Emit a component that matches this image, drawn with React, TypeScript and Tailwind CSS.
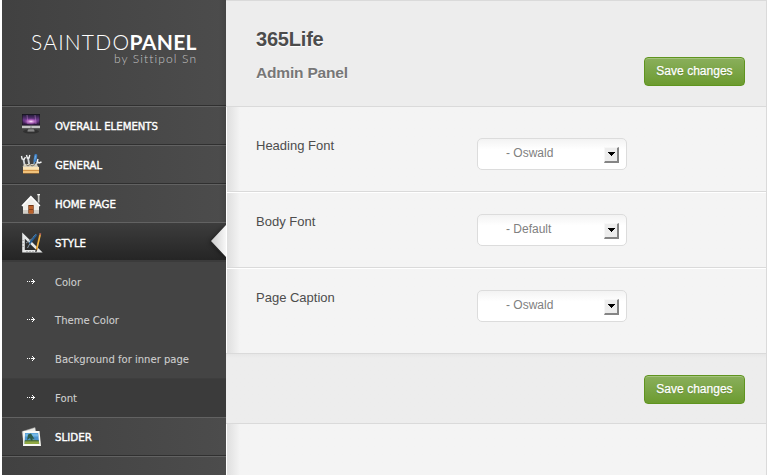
import React from "react";

const menuRow =
  "relative flex items-center h-[39px] shrink-0 border-t border-t-[#626262] border-b border-b-[#303030] bg-linear-to-r from-[#414141] to-[#4c4c4c] pl-[17px]";

function MonitorIcon() {
  return (
    <svg width="24" height="24" viewBox="0 1 24 24">
      <defs>
        <linearGradient id="screen" x1="0" y1="0" x2="0" y2="1">
          <stop offset="0" stopColor="#1f1a33" />
          <stop offset=".5" stopColor="#6d3a8c" />
          <stop offset="1" stopColor="#1c1028" />
        </linearGradient>
        <radialGradient id="glow">
          <stop offset="0" stopColor="#ffe3ff" />
          <stop offset=".5" stopColor="#c36acb" stopOpacity=".8" />
          <stop offset="1" stopColor="#7b399a" stopOpacity="0" />
        </radialGradient>
      </defs>
      <ellipse cx="12" cy="18.500" rx="8" ry="2" fill="#303030" />
      <path d="M9.500 15.500h5l.8 2.500H8.700z" fill="#777" />
      <path d="M8.500 17.500h7v1h-7z" fill="#999" />
      <path d="M3 1h18v14.500H3z" fill="#151515" />
      <path d="M3.500 1.500h17v11h-17z" fill="url(#screen)" />
      <ellipse cx="12" cy="8.500" rx="8" ry="3.500" fill="url(#glow)" />
      <path d="M8 2l1 9M16 2l1 9" stroke="#bb83cb" strokeWidth=".5" />
      <path d="M3 12.600h18v2.700H3z" fill="#c4c4c4" />
      <circle cx="12" cy="14" r=".6" fill="#444" />
    </svg>
  );
}

function ToolsIcon() {
  return (
    <svg width="24" height="24" viewBox="0 0 24 24">
      <path d="M6 14L4.500 6.500M10.500 13L9 5M16 13l3-4.500" stroke="#cfd4d8" strokeWidth="1.800" />
      <path d="M2.500 3l.6 3 2 .5 1.300-2.500M7.500 2l.8 3h1.700l.8-3M19 6l-.8 2.500 1.800 1.500 2.500-1" fill="none" stroke="#f3f5f6" strokeWidth="1.400" />
      <path d="M14.700 12l2-9" stroke="#6f9cc7" strokeWidth="1.500" />
      <path d="M16 7.500l.8-5" stroke="#3f7fc4" strokeWidth="3" strokeLinecap="round" />
      <path d="M15.800 6.500l.8-4" stroke="#86bfe9" strokeWidth=".8" />
      <path d="M5.500 11h12l2 3h-16z" fill="#d5cfbe" />
      <path d="M7 11.500l2 1.500 2-1.500 2 1.500 3-1.500" fill="none" stroke="#746e62" />
      <path d="M4 14h16v6.500H4z" fill="#c98535" />
      <path d="M4 14h16v3H4z" fill="#fae3b4" />
      <path d="M4 17.300h16" stroke="#c0792c" strokeWidth=".7" />
      <path d="M4 17.700h16v2.300H4z" fill="#f0c27b" />
    </svg>
  );
}

function HomeIcon() {
  return (
    <svg width="24" height="24" viewBox="0 0 24 24">
      <path d="M18.800 2.500h1.700v8h-1.700z" fill="#c9c9c4" />
      <path d="M18.300 2h2.700v1.300h-2.700z" fill="#f6f6f4" />
      <path d="M4 12.500l8-8 8 8v9H4z" fill="#efeeea" />
      <path d="M4 18h16v3.500H4z" fill="#d1cec7" />
      <path d="M3 14L11.900 4.500l9 9.500" fill="none" stroke="#fff" strokeWidth="1.500" />
      <path d="M9.300 13h5.400v8.500H9.300z" fill="#723514" />
      <path d="M10 14h4v7.500h-4z" fill="#ba622c" />
      <path d="M10 17.500h4" stroke="#87421d" />
    </svg>
  );
}

function StyleIcon() {
  return (
    <svg width="24" height="24" viewBox="0 0 24 24">
      <path d="M4.500 4.500v15.700h16z" fill="none" stroke="#e6e8e8" strokeWidth="2.600" />
      <path d="M4 9v1M4 12v1M4 15v1M8 20v1M11 20v1M14 20v1" stroke="#888" />
      <path d="M8.500 17L15 5l2-2M7 12l10-7" fill="none" stroke="#8fa1b1" strokeWidth=".9" />
      <path d="M11 12l6-8" stroke="#275f94" strokeWidth="2" strokeLinecap="round" />
      <path d="M17.500 19L21 4" stroke="#d99126" strokeWidth="1.800" />
      <path d="M18 17l3.200-13" stroke="#ffd165" strokeWidth=".7" />
      <path d="M21.400 2.300l-.4 1.700" stroke="#c06b57" strokeWidth="1.800" />
      <path d="M17.400 18.500l-.6 2.300" stroke="#161616" strokeWidth="1.200" />
    </svg>
  );
}

function PhotosIcon() {
  return (
    <svg width="24" height="24" viewBox="0 0 24 24">
      <path d="M3 6.500l13-4 3 14L5 20z" fill="#e9e9e5" stroke="#999" strokeWidth=".5" />
      <path d="M4.500 6h16L22 21H4z" fill="#fafaf5" />
      <path d="M6 8h13.200l1 11H5.500z" fill="#4a92cd" />
      <path d="M6.300 8.500h12.500l.4 3H6.300z" fill="#72b7e5" />
      <path d="M5.700 16q7-3 14.200 0l.3 3H5.500z" fill="#91a943" />
      <path d="M9 9.500l3-1 3.500 5.500-2-.5v2h-1.500l-1-2.500-3 2z" fill="#2d5a46" />
      <path d="M5.800 15.800h14" stroke="#365f3e" />
    </svg>
  );
}

function MenuText({ text, width, strong = false }: { text: string; width: number; strong?: boolean }) {
  return (
    <svg className="ml-3 overflow-visible" width={width} height="16">
      <text
        x="0"
        y="12"
        textLength={width}
        lengthAdjust="spacingAndGlyphs"
        fill={strong ? "#fff" : "#cfcfcf"}
        stroke={strong ? "#fff" : "#cfcfcf"}
        strokeWidth={strong ? 0.4 : 0.1}
        fontSize="11"
        className="[font-family:'DejaVu_Sans',sans-serif]"
      >
        {text}
      </text>
    </svg>
  );
}

function MenuRow({ icon, label, width }: { icon: React.ReactNode; label: string; width: number }) {
  return (
    <div className={menuRow}>
      {icon}
      <MenuText text={label} width={width} strong />
    </div>
  );
}

function SubRow({ label, width, className }: { label: string; width: number; className: string }) {
  return (
    <div className={`flex items-center pl-[17px] ${className}`}>
      <svg width="24" height="24" viewBox="0 0 24 24" shapeRendering="crispEdges" fill="#fff">
        <path d="M8 11h1v1H8zM10 11h1v1h-1zM12 11h4v1h-4zM13 9h1v1h-1zM14 10h1v1h-1zM14 12h1v1h-1zM13 13h1v1h-1z" />
      </svg>
      <MenuText text={label} width={width} />
    </div>
  );
}

function SaveButton() {
  return (
    <button className="h-[29px] w-[101px] shrink-0 rounded-[4px] border border-[#5f941f] bg-linear-to-b from-[#8aaf5b] to-[#6c9b2f] pb-px text-[12px] leading-none tracking-[0.02px] text-white shadow-[inset_0_1px_0_#a5c37d] [-webkit-text-stroke:0.25px_#fff] [text-shadow:0_1px_1px_#608532]">
      Save changes
    </button>
  );
}

function FontRow({ label, value, className }: { label: string; value: string; className: string }) {
  return (
    <div className={`flex pl-[29px] ${className}`}>
      <div className="-mt-px w-[221px] text-[13px] leading-[17px] text-[#4d4d4d]">{label}</div>
      <div className="flex h-[32px] w-[150px] items-center justify-between rounded-[5px] border border-[#dcdcdc] bg-white bg-linear-to-b from-[#f3f3f3] to-white to-35% pr-[7px] pl-[28px] text-[12px] text-[#808080]">
        <span className="pb-[3px]">{value}</span>
        <span className="mt-px flex h-[16px] w-[15px] items-center justify-center border-t border-l border-r-2 border-b-2 border-t-[#f7f7f7] border-r-[#858585] border-b-[#858585] border-l-[#f7f7f7] bg-[#ededed]">
          <svg width="7" height="4" viewBox="0 0 7 4" shapeRendering="crispEdges">
            <path d="M0 0h7v1H6v1H5v1H4v1H3V3H2V2H1V1H0z" />
          </svg>
        </span>
      </div>
    </div>
  );
}

export default function App() {
  return (
    <div className="flex h-[475px] w-[769px] overflow-hidden bg-white pl-[2px] [font-family:'Liberation_Sans',Arial,sans-serif]">
      <aside className="relative z-10 flex w-[224px] shrink-0 flex-col bg-[#444]">
        <header className="h-[106px] shrink-0 border-b border-[#303030] bg-linear-to-r from-[#414141] to-[#4c4c4c]">
          <svg width="224" height="105" className="[font-family:Lato,sans-serif] [font-variant-ligatures:none]">
            <text x="29" y="50" fontSize="21" fontWeight="300" fill="#fff" textLength="98">SAINTDO</text>
            <text x="127.500" y="50" fontSize="21" fontWeight="700" fill="#fff" textLength="67">PANEL</text>
            <text x="112" y="63" fontSize="12" fontWeight="300" fill="#c4c4c4" textLength="82">by Sittipol Sn</text>
          </svg>
        </header>
        <nav className="flex flex-col">
          <MenuRow icon={<MonitorIcon />} label="OVERALL ELEMENTS" width={103} />
          <MenuRow icon={<ToolsIcon />} label="GENERAL" width={47} />
          <div className="-mb-px"><MenuRow icon={<HomeIcon />} label="HOME PAGE" width={61} /></div>
          <div className="relative flex h-[40px] items-center border-t border-b-2 border-t-[#626262] border-b-[#3b3b3b] bg-linear-to-b from-[#3d3d3d] to-[#252525] pt-[2px] pl-[17px]">
            <StyleIcon />
            <MenuText text="STYLE" width={31} strong />
            <svg className="absolute top-0 right-0" width="28" height="37" viewBox="0 0 28 37">
              <defs>
                <linearGradient id="notch" x1="0" x2="1">
                  <stop offset="0" stopColor="#ccc" />
                  <stop offset="1" stopColor="#f8f8f8" />
                </linearGradient>
                <filter id="notchShadow" x="-50%" y="-50%" width="200%" height="200%">
                  <feGaussianBlur stdDeviation="2.500" />
                </filter>
              </defs>
              <path d="M28 3L12 19l16 16z" fill="#111" opacity=".55" filter="url(#notchShadow)" />
              <path d="M28 2L13 18l15 16z" fill="url(#notch)" />
            </svg>
          </div>
          <SubRow label="Color" width={26} className="h-[39px] pt-px" />
          <SubRow label="Theme Color" width={64} className="h-[38px]" />
          <SubRow label="Background for inner page" width={134} className="h-[40px]" />
          <SubRow label="Font" width={22} className="-mt-px h-[39px] border-t border-[#3e3e3e] bg-[#3b3b3b]" />
          <MenuRow icon={<PhotosIcon />} label="SLIDER" width={37} />
          <div className="h-[19px] border-t border-[#626262] bg-linear-to-r from-[#414141] to-[#4c4c4c]" />
        </nav>
        <div className="absolute top-0 right-0 h-[222px] w-[8px] bg-linear-to-r from-transparent to-black/10" />
      </aside>
      <main className="flex w-[541px] flex-col border-t border-r border-[#dadada] bg-[#f4f4f4]">
        <header className="flex h-[106px] shrink-0 justify-between border-b border-[#dadada] bg-[#ededed] pr-[21px] pl-[30px]">
          <div className="pt-[26px]">
            <h1 className="text-[20px] leading-[24px] font-bold tracking-[-0.200px] text-[#4c4c4c] [text-shadow:0_1px_1px_white]">365Life</h1>
            <h2 className="mt-[12px] text-[15.500px] leading-[20px] font-bold tracking-[-0.180px] text-[#777] [text-shadow:0_1px_0_white]">Admin Panel</h2>
          </div>
          <div className="pt-[56px]"><SaveButton /></div>
        </header>
        <section className="border-l border-white bg-linear-to-r from-[#dfdfdf] to-[#f4f4f4] to-[13px]">
          <FontRow label="Heading Font" value="- Oswald" className="h-[85px] border-b border-b-[#dadada] pt-[31px]" />
          <FontRow label="Body Font" value="- Default" className="h-[76px] border-t border-b border-t-white border-b-[#dadada] pt-[21px]" />
          <FontRow label="Page Caption" value="- Oswald" className="h-[85px] border-t border-t-white pt-[21px]" />
        </section>
        <footer className="flex h-[71px] shrink-0 justify-end border-t border-b border-[#dadada] bg-[#ededed] bg-linear-to-b from-[#e7e7e7] to-[#ededed] to-[4px] pt-[21px] pr-[21px]">
          <SaveButton />
        </footer>
        <div className="grow border-l border-white bg-linear-to-r from-[#dfdfdf] to-[#f4f4f4] to-[13px]" />
      </main>
    </div>
  );
}
